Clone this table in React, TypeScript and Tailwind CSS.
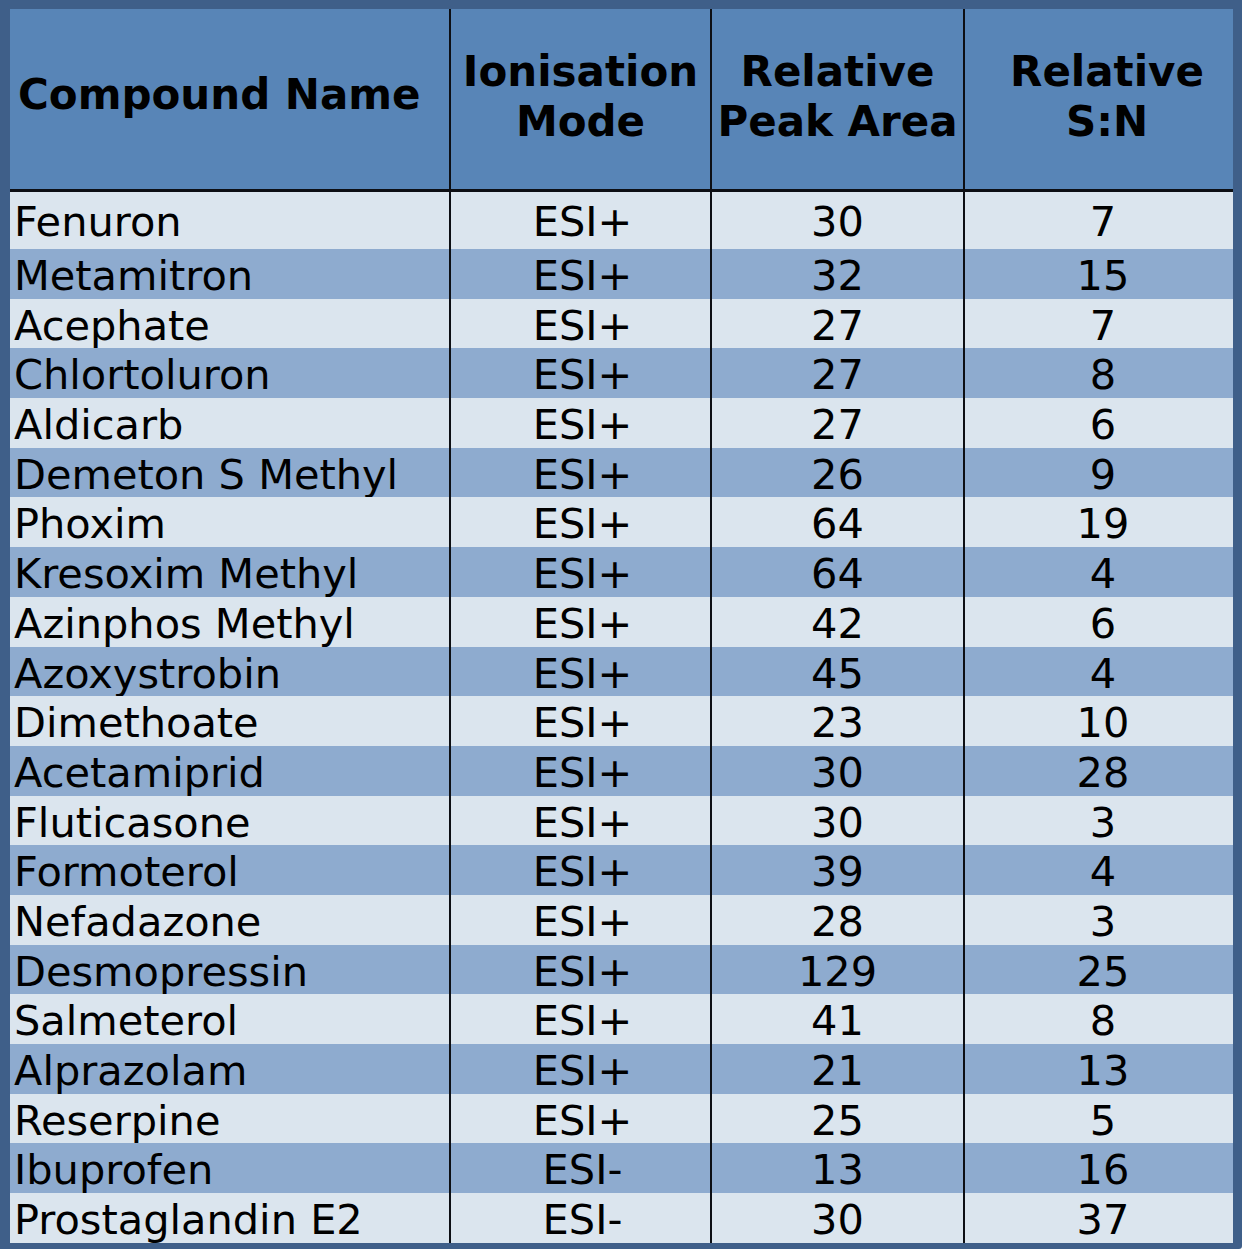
import React from 'react';

type Row = [string, string, string, string];

const rows: Row[] = [
  ['Fenuron', 'ESI+', '30', '7'],
  ['Metamitron', 'ESI+', '32', '15'],
  ['Acephate', 'ESI+', '27', '7'],
  ['Chlortoluron', 'ESI+', '27', '8'],
  ['Aldicarb', 'ESI+', '27', '6'],
  ['Demeton S Methyl', 'ESI+', '26', '9'],
  ['Phoxim', 'ESI+', '64', '19'],
  ['Kresoxim Methyl', 'ESI+', '64', '4'],
  ['Azinphos Methyl', 'ESI+', '42', '6'],
  ['Azoxystrobin', 'ESI+', '45', '4'],
  ['Dimethoate', 'ESI+', '23', '10'],
  ['Acetamiprid', 'ESI+', '30', '28'],
  ['Fluticasone', 'ESI+', '30', '3'],
  ['Formoterol', 'ESI+', '39', '4'],
  ['Nefadazone', 'ESI+', '28', '3'],
  ['Desmopressin', 'ESI+', '129', '25'],
  ['Salmeterol', 'ESI+', '41', '8'],
  ['Alprazolam', 'ESI+', '21', '13'],
  ['Reserpine', 'ESI+', '25', '5'],
  ['Ibuprofen', 'ESI-', '13', '16'],
  ['Prostaglandin E2', 'ESI-', '30', '37'],
];

export default function App() {
  return (
    <div className="w-[1243px] h-[1253px] bg-white text-black" style={{ fontFamily: '"DejaVu Sans", Verdana, sans-serif' }}>
      <div className="w-[1242px] border-l-[10px] border-t-[9px] border-r-[9px] border-b-[6px] border-[#3f5f89] rounded-br-[3px] flex flex-col">
        {/* Header */}
        <div className="flex h-[183px] bg-[#5885b7] border-b-[3px] border-[#0d0f14] font-bold text-[42px] leading-[50px]">
          <div className="w-[441px] border-r-2 border-[#0d0f14] flex items-center pl-2 pb-2">
            Compound Name
          </div>
          <div className="w-[261px] border-r-2 border-[#0d0f14] flex items-center justify-center text-center pb-1">
            Ionisation<br />Mode
          </div>
          <div className="w-[253px] border-r-2 border-[#0d0f14] flex items-center justify-center text-center pb-1">
            Relative<br />Peak Area
          </div>
          <div className="w-[268px] flex items-center justify-center text-center pl-4 pb-1">
            Relative<br />S:N
          </div>
        </div>

        {/* Body */}
        {rows.map((r, i) => {
          const pad = i === 0 ? 'pt-[6px]' : 'pt-[3px]';
          return (
            <div
              key={r[0]}
              className={`flex text-[41.5px] leading-[47px] ${i === 0 ? 'h-[57px]' : 'h-[49.7px]'} ${i % 2 === 0 ? 'bg-[#dbe5ee]' : 'bg-[#8eabcf]'}`}
            >
              <div className={`w-[441px] border-r-2 border-[#0d0f14] pl-1 whitespace-nowrap ${pad}`}>{r[0]}</div>
              <div className={`w-[261px] border-r-2 border-[#0d0f14] text-center pl-1 ${pad}`}>{r[1]}</div>
              <div className={`w-[253px] border-r-2 border-[#0d0f14] text-center ${pad}`}>{r[2]}</div>
              <div className={`w-[268px] text-center pl-2 ${pad}`}>{r[3]}</div>
            </div>
          );
        })}
      </div>
    </div>
  );
}
